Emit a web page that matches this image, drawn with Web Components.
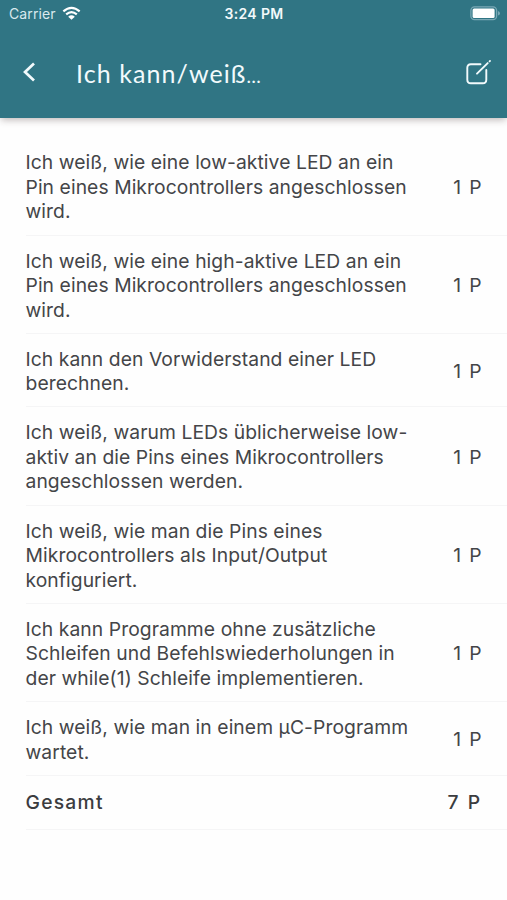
<!DOCTYPE html>
<html lang="de">
<head>
<meta charset="utf-8">
<title>Ich kann/weiß…</title>
<style>
html,body{margin:0;height:100%;background:#fefefe;overflow:hidden}
body{font-family:Inter,"Liberation Sans",sans-serif}
</style>
</head>
<body>
<check-page></check-page>
<script>
const define = (name, html) => customElements.define(name, class extends HTMLElement {
  constructor() {
    super();
    this.attachShadow({ mode: 'open' }).innerHTML = html;
  }
});

define('status-bar', `
<style>
:host{display:grid;grid-template-columns:1fr auto 1fr;align-items:center;height:27px;padding:0 7px 0 9px;box-sizing:border-box;color:#f2f9fb;line-height:27px}
.left{display:flex;align-items:center;gap:6px;font-size:14px;letter-spacing:.1px;color:#d9e9ee}
.time{font-size:14px;font-weight:600;letter-spacing:.35px;margin-left:-1px}
.battery{justify-self:end}
svg{display:block}
</style>
<div class="left"><span>Carrier</span>
<svg width="19" height="15" viewBox="0 0 20 15" fill="none" stroke="#fff" stroke-width="2.3"><path d="M1.4 5.3Q10-2.1 18.600 5.300"/><path d="M4.400 8.400Q10 3.600 15.600 8.400"/><path d="M10 14.200L6.500 10.800Q10 7.900 13.500 10.800Z" fill="#fff" stroke="none"/></svg></div>
<span class="time">3:24 PM</span>
<svg class="battery" width="30" height="15" viewBox="0 0 30 15"><rect x=".9" y=".9" width="25.700" height="12.700" rx="3.600" fill="none" stroke="#79a8b5" stroke-width="1.300"/><rect x="2.600" y="2.600" width="22" height="9.300" rx="1.500" fill="#fff"/><path d="M28 5q2 .7 2 2.300t-2 2.300z" fill="#79a8b5"/></svg>`);

define('nav-bar', `
<style>
:host{display:flex;align-items:center;height:91px;padding:0 14px 0 21px;box-sizing:border-box;color:#f2fafc}
svg{display:block;flex:none}
h1{flex:1;margin:4px 0 0 37px;font:400 25px/36px Lato,"Open Sans",sans-serif;letter-spacing:1.080px;white-space:nowrap}
h1 span{font-size:19px;letter-spacing:0}
</style>
<svg width="18" height="24" viewBox="0 0 18 24" fill="none" stroke="currentColor" stroke-width="2.700"><path d="M13 2.400L4 11L13 19.600"/></svg>
<h1>Ich kann/weiß<span>…</span></h1>
<svg width="28" height="28" viewBox="0 0 28 28" fill="none" stroke="currentColor" stroke-width="1.900" stroke-linecap="round"><path d="M15.500 5.300H5.800Q2.300 5.300 2.300 8.800V20.800Q2.300 24.300 5.800 24.300H17.800Q21.300 24.300 21.300 20.800V11"/><path d="M12 14.700L22.700 4.100M24.600 2.300L25 1.900"/></svg>`);

define('skill-row', `
<style>
:host{display:block;padding-left:25.500px;color:#444548}
.row{display:flex;align-items:center;justify-content:space-between;box-sizing:border-box;padding:13px 24.500px 10.600px 0;border-bottom:1px solid #f5f5f6;font-size:19.300px;line-height:24.530px;letter-spacing:.07px;white-space:nowrap}
.points{letter-spacing:.9px;word-spacing:1px}
:host([total]){color:#3b3c3f;font-weight:500}
:host([total]) .row{padding:14.200px 25.500px 14.200px 0;letter-spacing:1.250px}
:host([total]) .points{letter-spacing:1.300px;word-spacing:1.500px}
</style>
<div class="row"><div><slot></slot></div><div class="points"><slot name="points"></slot></div></div>`);

define('check-page', `
<style>
:host{display:flex;flex-direction:column;height:900px}
header{background:#307584;box-shadow:0 3px 7px -1px rgba(60,40,40,.32);height:118px;flex:none}
main{padding-top:19.400px}
</style>
<header><status-bar></status-bar><nav-bar></nav-bar></header>
<main>
<skill-row>Ich weiß, wie eine low-aktive LED an ein<br>Pin eines Mikrocontrollers angeschlossen<br>wird.<span slot="points">1 P</span></skill-row>
<skill-row>Ich weiß, wie eine high-aktive LED an ein<br>Pin eines Mikrocontrollers angeschlossen<br>wird.<span slot="points">1 P</span></skill-row>
<skill-row>Ich kann den Vorwiderstand einer LED<br>berechnen.<span slot="points">1 P</span></skill-row>
<skill-row>Ich weiß, warum LEDs üblicherweise low-<br>aktiv an die Pins eines Mikrocontrollers<br>angeschlossen werden.<span slot="points">1 P</span></skill-row>
<skill-row>Ich weiß, wie man die Pins eines<br>Mikrocontrollers als Input/Output<br>konfiguriert.<span slot="points">1 P</span></skill-row>
<skill-row>Ich kann Programme ohne zusätzliche<br>Schleifen und Befehlswiederholungen in<br>der while(1) Schleife implementieren.<span slot="points">1 P</span></skill-row>
<skill-row>Ich weiß, wie man in einem µC-Programm<br>wartet.<span slot="points">1 P</span></skill-row>
<skill-row total>Gesamt<span slot="points">7 P</span></skill-row>
</main>`);
</script>
</body>
</html>
